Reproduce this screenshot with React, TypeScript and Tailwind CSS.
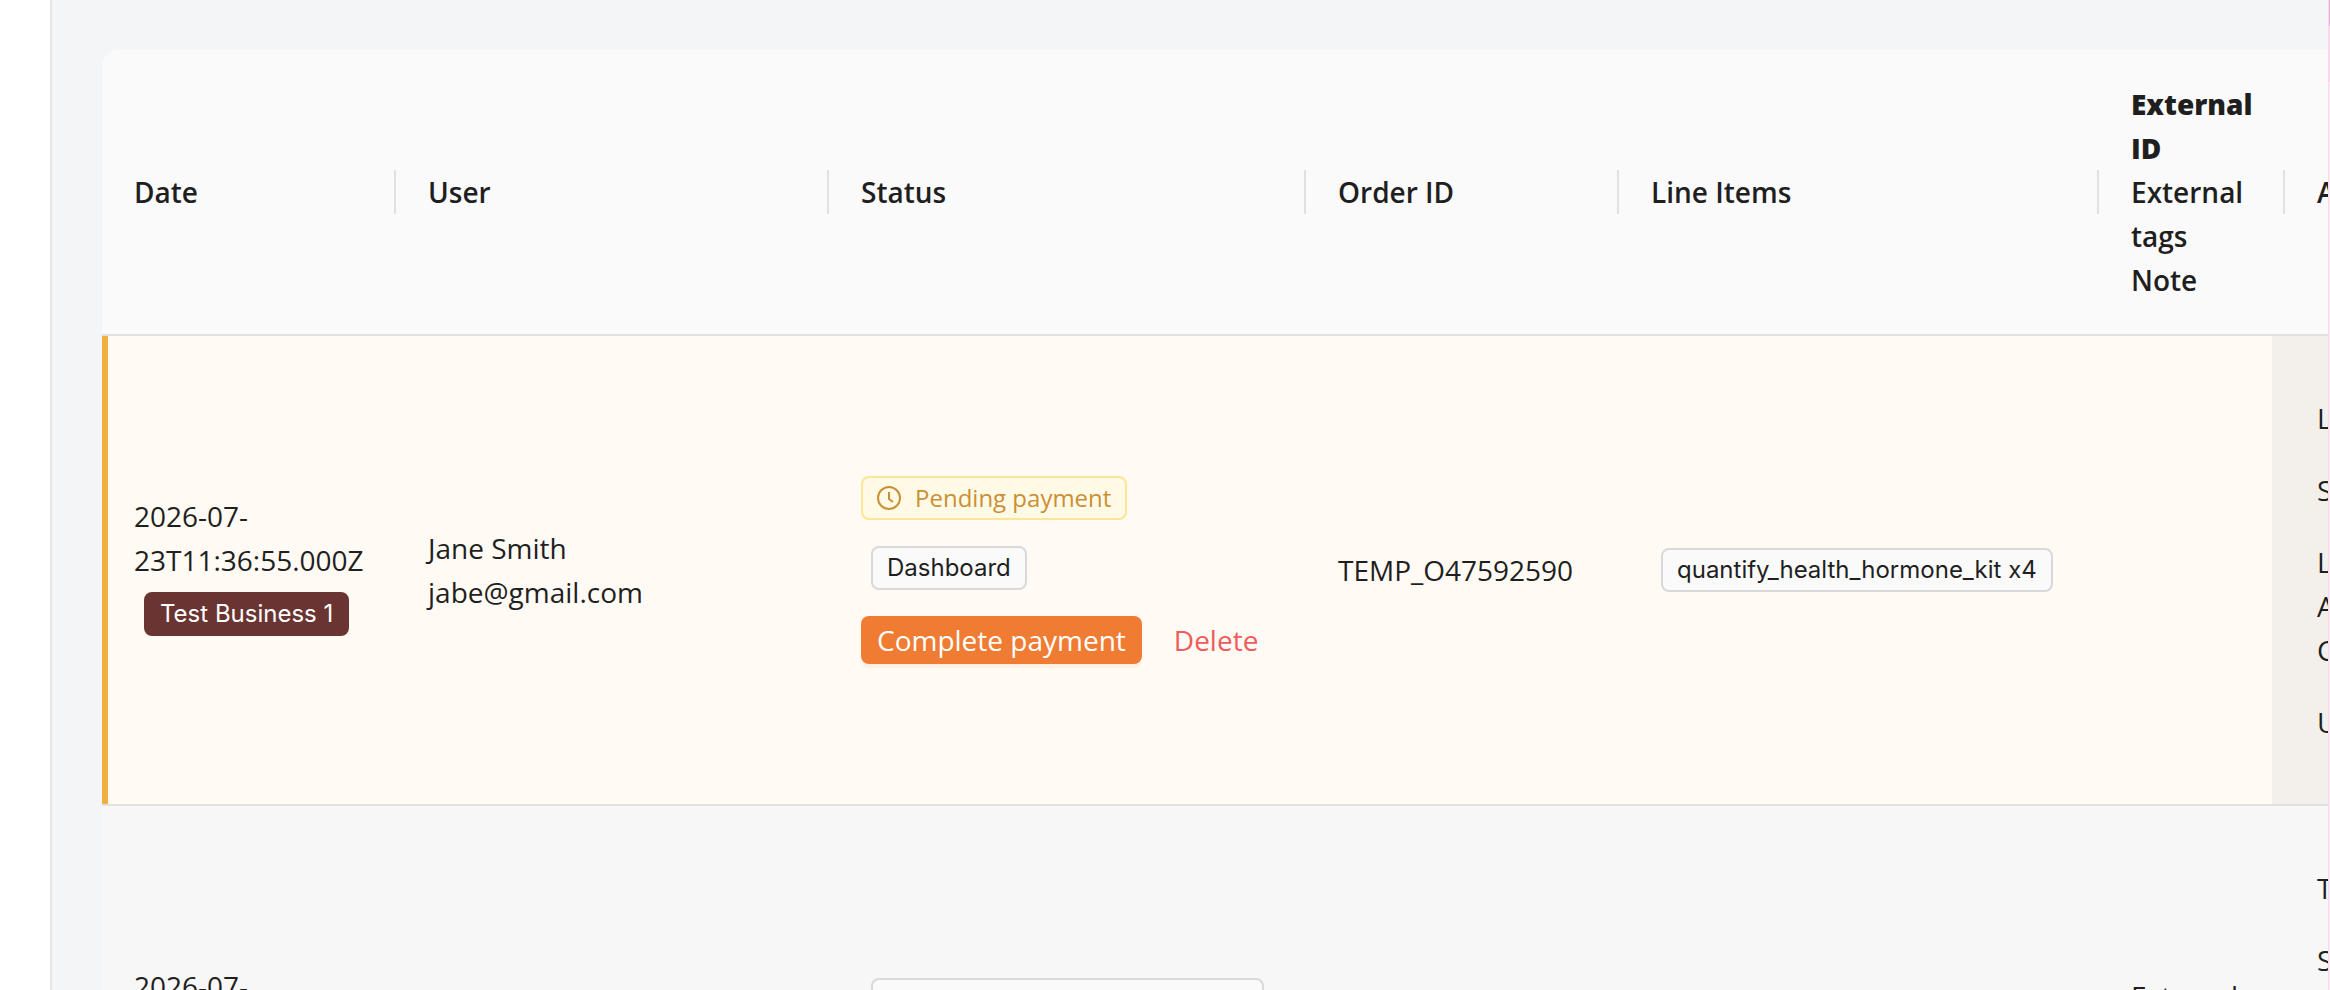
import clsx from "clsx";

type Order = {
  date: string[];
  business: string;
  name: string;
  email: string;
  dashboard: string;
  orderId: string;
  lineItem: string;
  external: string;
  actions: string[][];
  pending: boolean;
};

const orders: Order[] = [
  {
    date: ["2026-07-", "23T11:36:55.000Z"],
    business: "Test Business 1",
    name: "Jane Smith",
    email: "jabe@gmail.com",
    dashboard: "Dashboard",
    orderId: "TEMP_O47592590",
    lineItem: "quantify_health_hormone_kit x4",
    external: "",
    actions: [["L"], ["S"], ["L", "A", "C"], ["U"]],
    pending: true,
  },
  {
    date: ["2026-07-"],
    business: "",
    name: "",
    email: "",
    dashboard: "",
    orderId: "",
    lineItem: "",
    external: "External",
    actions: [["T"], ["S"]],
    pending: false,
  },
];

function Tag({ children, className }: { children?: React.ReactNode; className?: string }) {
  return (
    <span
      className={clsx(
        "flex h-11 w-fit items-center rounded-lg border-2 px-[14px] text-2xl whitespace-nowrap",
        className
      )}
    >
      {children}
    </span>
  );
}

function ClockIcon() {
  return (
    <svg viewBox="0 0 24 24" className="size-6" fill="none" stroke="currentColor" strokeWidth="2">
      <circle cx="12" cy="12" r="11" />
      <path d="M12 6v7l4 3" />
    </svg>
  );
}

function HeaderCell({ children, last }: { children: React.ReactNode; last?: boolean }) {
  return (
    <th
      scope="col"
      className={clsx(
        "relative border-b-2 border-[#e1e1e1] bg-[#fafafa] p-8 text-left font-semibold",
        !last &&
          "after:absolute after:top-1/2 after:right-0 after:h-11 after:w-[2px] after:-translate-y-1/2 after:bg-[#e1e1e1]"
      )}
    >
      {children}
    </th>
  );
}

function ActionList({ groups }: { groups: string[][] }) {
  return (
    <ul className="flex flex-col gap-7">
      {groups.map((group, i) => (
        <li key={i}>
          {group.map((line) => (
            <div key={line}>{line}</div>
          ))}
        </li>
      ))}
    </ul>
  );
}

const cell = "border-b-2 border-[#e1e1e1] px-8";
const grayTag = "ml-[10px] border-[#d9d9d9] bg-[#fafafa] font-['Inter','Open_Sans',sans-serif]";

function PendingRow({ order }: { order: Order }) {
  return (
    <tr className="h-[470px] bg-[#fffbf4]">
      <td
        className={clsx(
          cell,
          "relative before:absolute before:inset-y-0 before:left-0 before:w-[6px] before:bg-[#efb041]"
        )}
      >
        {order.date.map((part) => (
          <div key={part}>{part}</div>
        ))}
        <Tag className="my-[10px] ml-[10px] border-[#6a3432] bg-[#6a3432] font-['Inter','Open_Sans',sans-serif] text-white">
          {order.business}
        </Tag>
      </td>
      <td className={cell}>
        {order.name}
        <br />
        {order.email}
      </td>
      <td className={cell}>
        <Tag className="gap-[14px] border-[#fde596] bg-[#fffae6] text-[#cb8f35]">
          <ClockIcon />
          Pending payment
        </Tag>
        <Tag className={clsx(grayTag, "mt-[26px]")}>{order.dashboard}</Tag>
        <div className="mt-[26px] flex gap-4">
          <button className="h-12 rounded-lg bg-[#f07b32] px-4 whitespace-nowrap text-white shadow-[0_4px_0_#fff0e2]">
            Complete payment
          </button>
          <button className="h-12 px-4 text-[#ee5c5c]">Delete</button>
        </div>
      </td>
      <td className={cell}>{order.orderId}</td>
      <td className={cell}>
        <Tag className={grayTag}>{order.lineItem}</Tag>
      </td>
      <td className={cell}>{order.external}</td>
      <td
        className={clsx(
          cell,
          "relative bg-[#f3f0eb] before:absolute before:inset-y-0 before:-left-[13px] before:w-[13px] before:bg-[#f3f0eb]"
        )}
      >
        <ActionList groups={order.actions} />
      </td>
    </tr>
  );
}

function PlainRow({ order }: { order: Order }) {
  return (
    <tr className="h-[470px] bg-[#f7f7f7] align-top">
      <td className={clsx(cell, "pt-[158px]")}>{order.date[0]}</td>
      <td className={cell}>{order.name}</td>
      <td className={clsx(cell, "pt-[172px]")}>
        <Tag className={clsx(grayTag, "min-w-[393px]")}>{order.dashboard}</Tag>
      </td>
      <td className={cell}>{order.orderId}</td>
      <td className={cell}>{order.lineItem}</td>
      <td className={clsx(cell, "pt-[168px]")}>{order.external}</td>
      <td className={clsx(cell, "pt-[60px]")}>
        <ActionList groups={order.actions} />
      </td>
    </tr>
  );
}

export default function App() {
  return (
    <div className="flex h-screen overflow-hidden bg-[#f3f5f7] font-['Open_Sans',sans-serif] text-[28px] leading-[44px] text-[#1f1f1f]">
      <aside className="w-[52px] shrink-0 border-r-2 border-[#e5e5e5] bg-white" />
      <main className="min-w-0 flex-1 overflow-hidden pt-[50px] pl-[50px]">
        <table className="w-full table-fixed border-separate border-spacing-0 overflow-hidden rounded-tl-2xl">
          <colgroup>
            <col className="w-[294px]" />
            <col className="w-[433px]" />
            <col className="w-[477px]" />
            <col className="w-[313px]" />
            <col className="w-[480px]" />
            <col className="w-[186px]" />
            <col />
          </colgroup>
          <thead>
            <tr>
              <HeaderCell>Date</HeaderCell>
              <HeaderCell>User</HeaderCell>
              <HeaderCell>Status</HeaderCell>
              <HeaderCell>Order ID</HeaderCell>
              <HeaderCell>Line Items</HeaderCell>
              <HeaderCell>
                <strong className="font-extrabold">External ID</strong>
                <br />
                External tags
                <br />
                Note
              </HeaderCell>
              <HeaderCell last>A</HeaderCell>
            </tr>
          </thead>
          <tbody>
            {orders.map((order, i) =>
              order.pending ? <PendingRow key={i} order={order} /> : <PlainRow key={i} order={order} />
            )}
          </tbody>
        </table>
      </main>
      {/* right edge stripe */}
      <div className="flex w-[2px] shrink-0 flex-col border-l border-[#fad7ec] bg-[#fdeaf6]">
        <div className="h-[26px] bg-[#eda9d5]" />
        <div className="h-14 bg-[#f7d3e8]" />
      </div>
    </div>
  );
}
